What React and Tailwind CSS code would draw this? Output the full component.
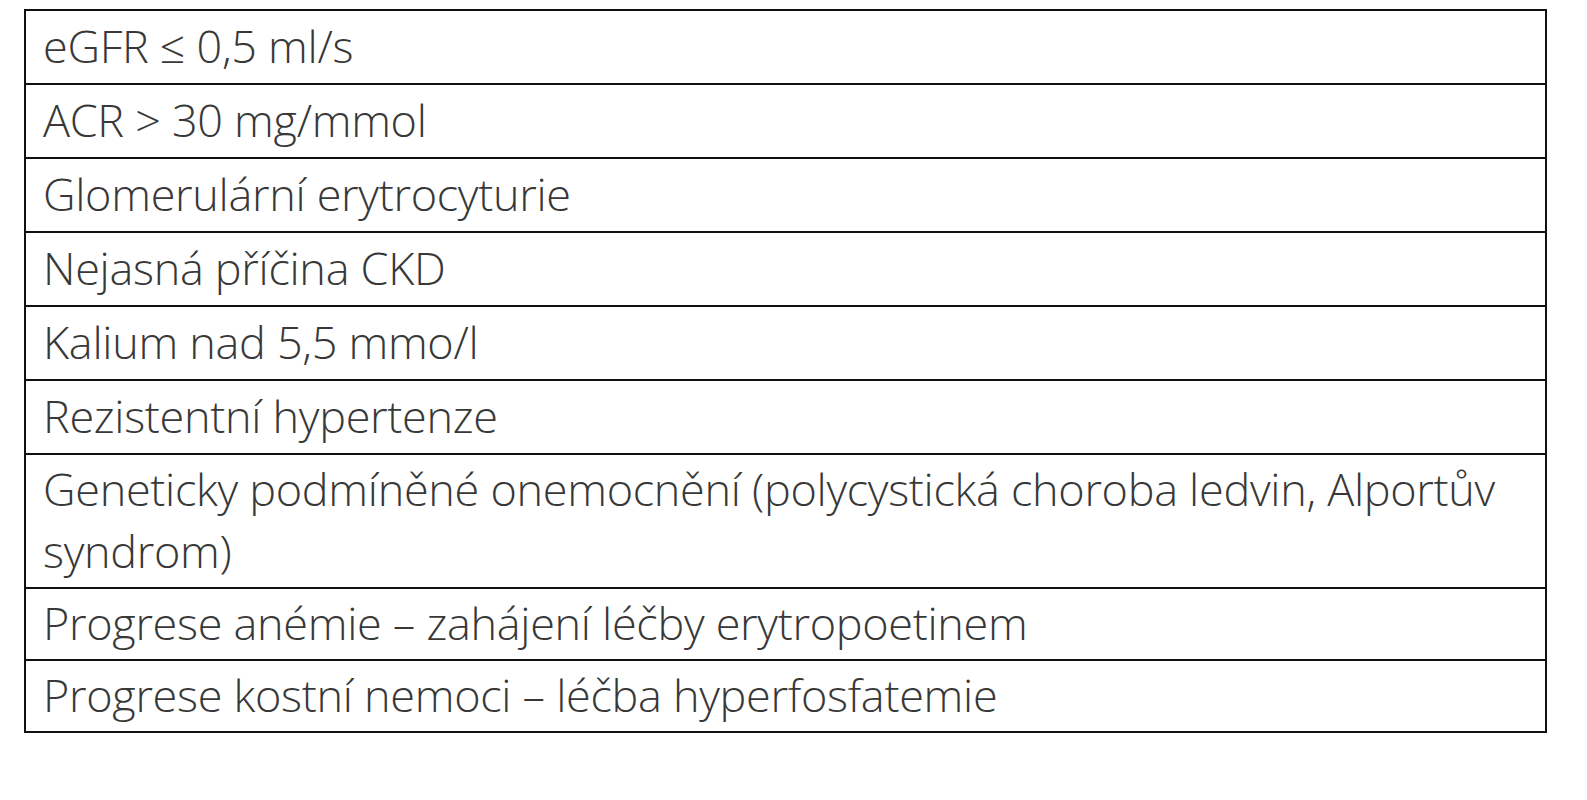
const rows = [
  { text: 'eGFR ≤ 0,5 ml/s' },
  { text: 'ACR > 30 mg/mmol' },
  { text: 'Glomerulární erytrocyturie' },
  { text: 'Nejasná příčina CKD' },
  { text: 'Kalium nad 5,5 mmo/l' },
  { text: 'Rezistentní hypertenze' },
  {
    text: (
      <>
        Geneticky podmíněné onemocnění (polycystická choroba ledvin, Alportův
        <br />
        syndrom)
      </>
    ),
    tight: true,
  },
  { text: 'Progrese anémie – zahájení léčby erytropoetinem', tight: true },
  { text: 'Progrese kostní nemoci – léčba hyperfosfatemie', tight: true },
];

export default function App() {
  return (
    <div className="min-h-screen bg-white pt-[9px] pl-[24px]">
      <table className="w-[1523px] table-fixed border-collapse">
        <tbody>
          {rows.map((r, i) => (
            <tr key={i}>
              <td
                className={`border-2 border-[#111] pl-[17px] pr-[17px] whitespace-nowrap font-['Open_Sans',sans-serif] font-light text-[45px] leading-[62px] tracking-[-0.3px] text-[#383838] ${
                  r.tight ? 'pt-[3px] pb-[5px]' : 'pt-[4px] pb-[6px]'
                }`}
              >
                {r.text}
              </td>
            </tr>
          ))}
        </tbody>
      </table>
    </div>
  );
}
